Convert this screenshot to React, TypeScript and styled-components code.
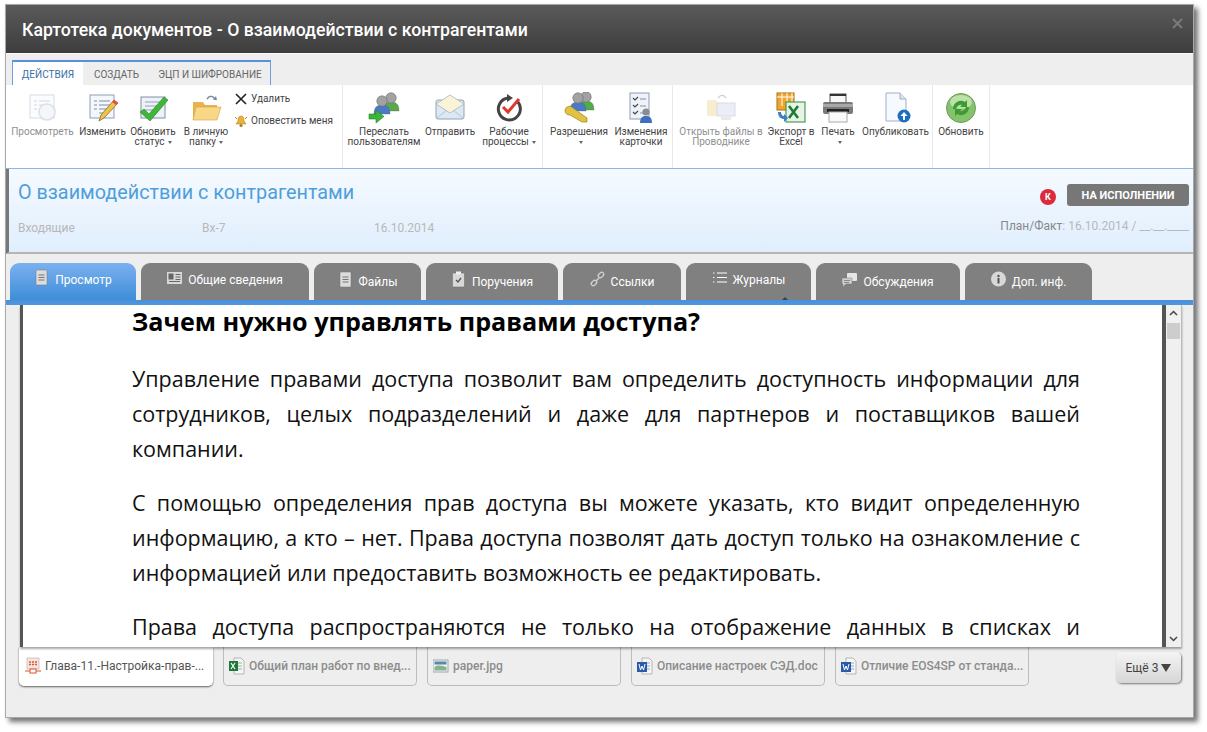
import React from "react";
import styled, { createGlobalStyle } from "styled-components";

const Global = createGlobalStyle`
  html, body { margin: 0; padding: 0; background: #fff; }
  body { font-family: Roboto, "Liberation Sans", sans-serif; }
  #root { width: 1207px; height: 732px; overflow: hidden; }
`;

const Page = styled.div`
  padding: 4px 0 0 5px;
`;
const Win = styled.div`
  width: 1189px;
  height: 714px;
  background: #eeeeee;
  box-shadow: 4px 4px 5px rgba(0, 0, 0, 0.55);
  display: flex;
  flex-direction: column;
  outline: 1px solid #a8a8a8;
  outline-offset: -1px;
`;
const TitleBar = styled.div`
  height: 49px;
  flex: none;
  padding: 0 11px 0 17px;
  display: flex;
  align-items: center;
  justify-content: space-between;
  background: linear-gradient(#5a5a5a, #3d3d3d);
  border-top: 1px solid #8a8a8a;
  box-sizing: border-box;
`;
const Title = styled.div`
  color: #fff;
  font-size: 17.67px;
  font-weight: 500;
  margin-top: 2px;
`;
const CloseIcon = styled.svg`
  width: 11px;
  height: 11px;
  margin-bottom: 12px;
`;
const Strip = styled.div`
  height: 32px;
  flex: none;
  box-sizing: border-box;
  padding: 6px 0 0 7px;
  border-top: 1px solid #fafafa;
  background: #eeeeee;
`;
const StripTabs = styled.div`
  display: inline-flex;
  height: 26px;
  box-sizing: border-box;
  border: 1px solid #6f9fe0;
  border-top: 2px solid #5b8fdc;
  border-bottom: none;
`;
const StripTab = styled.div<{ $w: number; $active?: boolean }>`
  width: ${(p) => p.$w}px;
  display: flex;
  align-items: center;
  justify-content: center;
  font-size: 10px;
  color: ${(p) => (p.$active ? "#3a6ea5" : "#666")};
  background: ${(p) => (p.$active ? "#fff" : "#eeeeee")};
`;
const Ribbon = styled.div`
  height: 84px;
  flex: none;
  box-sizing: border-box;
  display: flex;
  background: #fff;
  border-bottom: 1px solid #8db4e6;
`;
const Group = styled.div<{ $w: number }>`
  width: ${(p) => p.$w}px;
  flex: none;
  box-sizing: border-box;
  border-right: 1px solid #e8e8e8;
  display: flex;
  align-items: flex-start;
`;
const RBtn = styled.div<{ $w: number; $dim?: boolean }>`
  width: ${(p) => p.$w}px;
  flex: none;
  display: flex;
  flex-direction: column;
  align-items: center;
  padding-top: 7px;
  font-size: 10px;
  line-height: 10px;
  text-align: center;
  white-space: nowrap;
  color: ${(p) => (p.$dim ? "#8f8f8f" : "#444")};
`;
const RLabel = styled.span`
  display: block;
  height: 10px;
`;
const RIcon = styled.svg`
  width: 32px;
  height: 32px;
  margin-bottom: 3px;
  flex: none;
`;
const Caret = styled.span`
  display: inline-block;
  width: 0;
  height: 0;
  border: 2px solid transparent;
  border-top: 3px solid #666;
  margin-left: 3px;
  vertical-align: -1px;
`;
const SmallCol = styled.div`
  display: flex;
  flex-direction: column;
  gap: 7px;
  padding: 6px 0 0 3px;
  width: 109px;
  flex: none;
`;
const SmallBtn = styled.div`
  display: flex;
  align-items: center;
  gap: 3px;
  height: 15px;
  font-size: 10px;
  color: #444;
`;
const SmallIcon = styled.svg`
  width: 14px;
  height: 14px;
  flex: none;
`;
const Header = styled.div`
  height: 85px;
  flex: none;
  box-sizing: border-box;
  background: linear-gradient(#f5faff, #e0eefd);
  border-left: 4px solid #777;
  border-bottom: 2px solid #b5b5b5;
  padding: 13px 5px 0 9px;
  display: flex;
  justify-content: space-between;
`;
const HeadLeft = styled.div`
  display: flex;
  flex-direction: column;
`;
const DocTitle = styled.div`
  font-size: 19.8px;
  line-height: 22px;
  color: #4f9edb;
`;
const Meta = styled.div`
  display: flex;
  margin-top: 17px;
  font-size: 12px;
  line-height: 14px;
  color: #b8b8b8;
`;
const MetaItem = styled.span<{ $w: number }>`
  width: ${(p) => p.$w}px;
`;
const HeadRight = styled.div`
  display: flex;
  flex-direction: column;
  align-items: flex-end;
`;
const StatusRow = styled.div`
  display: flex;
  align-items: center;
  gap: 11px;
  margin-top: 2px;
`;
const Badge = styled.div`
  width: 16px;
  height: 16px;
  border-radius: 50%;
  background: #dc2b3c;
  color: #fff;
  font-size: 9px;
  font-weight: 700;
  display: flex;
  align-items: center;
  justify-content: center;
  margin-top: 3px;
`;
const Status = styled.div`
  width: 122px;
  height: 22px;
  border-radius: 3px;
  background: #777;
  color: #fff;
  font-size: 11px;
  font-weight: 700;
  display: flex;
  align-items: center;
  justify-content: center;
`;
const PlanFact = styled.div`
  margin-top: 13px;
  font-size: 12px;
  line-height: 14px;
  color: #b8b8b8;
  b {
    font-weight: 400;
    color: #888;
  }
`;
const TabRow = styled.div`
  height: 46px;
  flex: none;
  box-sizing: border-box;
  padding: 9px 0 0 5px;
  display: flex;
  gap: 5px;
  background: #eeeeee;
`;
const Tab = styled.div<{ $w: number; $active?: boolean; $dy: number }>`
  width: ${(p) => p.$w}px;
  flex: none;
  box-sizing: border-box;
  border-radius: 9px 9px 0 0;
  background: ${(p) =>
    p.$active ? "linear-gradient(#7ab1f0, #3f8dd8)" : "#808080"};
  color: #fff;
  font-size: 12px;
  display: flex;
  align-items: center;
  justify-content: center;
  gap: 6px;
  padding: 0 0 ${(p) => p.$dy * 3}px 0;
  position: relative;
`;
const TabIcon = styled.svg`
  width: 15px;
  height: 17px;
  flex: none;
  margin-top: -5px;
`;
const Notch = styled.span`
  position: absolute;
  right: 23px;
  bottom: 0;
  width: 0;
  height: 0;
  border: 3px solid transparent;
  border-top: none;
  border-bottom: 3px solid #26465f;
`;
const BlueLine = styled.div`
  height: 5px;
  flex: none;
  background: linear-gradient(#4a8fd6, #4d98e2);
`;
const Content = styled.div`
  height: 342px;
  flex: none;
  margin-left: 15px;
  width: 1162px;
  display: flex;
  box-shadow: 0 2px 2px rgba(0, 0, 0, 0.35);
  position: relative;
`;
const Doc = styled.div`
  width: 1146px;
  flex: none;
  box-sizing: border-box;
  overflow: hidden;
  background: #fff;
  border-left: 3px solid #555;
  border-right: 4px solid #555;
  padding: 0 82px 0 109px;
  font-family: "Open Sans", "Noto Sans", sans-serif;
  color: #111;
`;
const H2 = styled.h2`
  margin: 0 0 24px;
  font-size: 25.15px;
  line-height: 32px;
  font-weight: 700;
  color: #000;
`;
const P = styled.p<{ $clip?: boolean }>`
  margin: 0 0 19px;
  font-size: 21.5px;
  line-height: 35px;
  text-align: justify;
  text-align-last: ${(p) => (p.$clip ? "justify" : "auto")};
`;
const Scroll = styled.div`
  width: 16px;
  flex: none;
  background: #f0f0f0;
  border-right: 1px solid #bbb;
  box-sizing: border-box;
  display: flex;
  flex-direction: column;
  justify-content: space-between;
  align-items: center;
  padding: 4px 0;
  position: relative;
`;
const Thumb = styled.div`
  position: absolute;
  top: 18px;
  left: 1px;
  width: 13px;
  height: 16px;
  background: #cdcdcd;
`;
const ArrowIcon = styled.svg`
  width: 9px;
  height: 9px;
`;
const FileBar = styled.div`
  flex: 1;
  display: flex;
  align-items: flex-start;
  padding-left: 14px;
`;
const FileTab = styled.div<{ $active?: boolean }>`
  width: 194px;
  height: 39px;
  flex: none;
  box-sizing: border-box;
  margin-right: 10px;
  padding: 0 0 0 5px;
  display: flex;
  align-items: center;
  gap: 4px;
  font-size: 12px;
  font-weight: ${(p) => (p.$active ? 400 : 500)};
  white-space: nowrap;
  color: ${(p) => (p.$active ? "#555" : "#8c8c8c")};
  background: ${(p) => (p.$active ? "#fff" : "transparent")};
  border: 1px solid ${(p) => (p.$active ? "#fff" : "#bcbcbc")};
  border-top: none;
  border-radius: 0 0 5px 5px;
  box-shadow: ${(p) => (p.$active ? "0 1px 2px rgba(0,0,0,.6)" : "none")};
`;
const FileIcon = styled.svg`
  width: 16px;
  height: 18px;
  flex: none;
`;
const More = styled.div`
  width: 65px;
  height: 31px;
  margin: 5px 0 0 77px;
  flex: none;
  border-radius: 5px;
  background: linear-gradient(#f4f4f4, #d6d6d6);
  box-shadow: 1px 1px 2px rgba(0, 0, 0, 0.5);
  font-size: 12px;
  color: #444;
  display: flex;
  align-items: center;
  justify-content: center;
  gap: 3px;
`;
const MoreTri = styled.span`
  width: 0;
  height: 0;
  border: 5px solid transparent;
  border-top: 8px solid #444;
  border-bottom: none;
`;

const Person = ({ x, y, c }: { x: number; y: number; c: string }) => (
  <g>
    <path d={`M${x - 8} ${y + 18}c0-7 3-9 8-9s8 2 8 9z`} fill={c} stroke="#555" strokeWidth=".3" />
    <circle cx={x} cy={y + 5} r="5.2" fill="#a2a2a2" stroke="#6a6a6a" strokeWidth=".6" />
  </g>
);
const Page1 = ({ o = 1 }: { o?: number }) => (
  <g opacity={o}>
    <rect x="3" y="3" width="24" height="23" fill="#f4f7fb" stroke="#8c9db5" />
    <path d="M7 9h3M7 13h3M7 17h3M12 9h11M12 13h11M12 17h11M12 21h8" stroke="#7c8ea8" strokeWidth="1.2" />
  </g>
);
const I: Record<string, React.ReactNode> = {
  view: (
    <g opacity=".35">
      <Page1 />
      <circle cx="20" cy="20" r="8" fill="#dfe8f2" stroke="#97a7b8" strokeWidth="1.5" />
    </g>
  ),
  edit: (
    <g>
      <Page1 />
      <path d="M12 29l2-6L27 8l4 3-14 15z" fill="#f0c14b" stroke="#8a6a20" strokeWidth=".8" />
      <path d="M27 8l4 3-2 2-4-3z" fill="#d9534f" />
    </g>
  ),
  check: (
    <g>
      <rect x="4" y="5" width="24" height="21" fill="#eef2f7" stroke="#7f8fa5" />
      <path d="M8 10h16M8 14h16M8 18h10" stroke="#8fa0b8" strokeWidth="1.2" />
      <path d="M3 20l4-3 5 5L27 5l4 3-18 21z" fill="#3fb53a" stroke="#24851f" strokeWidth=".6" />
    </g>
  ),
  folder: (
    <g>
      <path d="M3 10h10l2 3h12v15H3z" fill="#e9b34f" />
      <path d="M6 15h25l-4 13H3z" fill="#f8d787" stroke="#d3a347" strokeWidth=".6" />
      <path d="M17 7c3-4 6-3 8 0" fill="none" stroke="#7b8a9b" strokeWidth="1.5" />
      <path d="M23 8l4 0-1-4z" fill="#7b8a9b" />
    </g>
  ),
  forward: (
    <g>
      <Person x={23} y={1} c="#5aa84a" />
      <Person x={14} y={4} c="#4a79c8" />
      <path d="M1 22h7v-4l8 6.500-8 6.500v-4H1z" fill="#3cb43c" stroke="#1f8a22" strokeWidth=".6" />
    </g>
  ),
  mail: (
    <g>
      <rect x="2" y="8" width="28" height="19" rx="2" fill="#dce8f3" stroke="#8da4bb" />
      <path d="M2 12L16 3l14 9-14 9z" fill="#fbf3d8" stroke="#a9b4bd" strokeWidth=".8" />
      <path d="M3 26l10-8M29 26l-10-8" stroke="#b4c5d6" />
    </g>
  ),
  flow: (
    <g>
      <path d="M24 9a11 11 0 1 1-9-3" fill="none" stroke="#444" strokeWidth="3" />
      <path d="M14 2l6 4-6 4z" fill="#444" />
      <path d="M10 15l5 5L26 7" fill="none" stroke="#e0392c" strokeWidth="3" />
    </g>
  ),
  perm: (
    <g>
      <Person x={23} y={0} c="#4fae47" />
      <Person x={15} y={1} c="#4a79c8" />
      <path d="M2 18a4.500 4.500 0 0 1 8-2l14 10v4h-5L7 23a4.500 4.500 0 0 1-5-5z" fill="#e4c241" stroke="#9c8320" strokeWidth=".7" />
    </g>
  ),
  changes: (
    <g>
      <rect x="5" y="1" width="19" height="26" fill="#eef3fa" stroke="#8c9db5" />
      <path d="M8 6l2 2 3-3M8 13l2 2 3-3M8 20l2 2 3-3" fill="none" stroke="#444" strokeWidth="1.1" />
      <path d="M15 7h6M15 14h6M15 21h3" stroke="#7c8ea8" />
      <path d="M15 31c0-6 3-7 6-7s6 1 6 7z" fill="#3f6fbd" />
      <circle cx="21" cy="20" r="3.6" fill="#8c8c8c" />
    </g>
  ),
  openf: (
    <g opacity=".4">
      <path d="M2 8h9l2 3h7v13H2z" fill="#f0d08f" />
      <rect x="12" y="11" width="18" height="13" fill="#cfd4f0" stroke="#aaa" />
      <rect x="16" y="24" width="10" height="4" fill="#ccc" />
      <path d="M13 6c3-4 6-3 8 0" fill="none" stroke="#888" strokeWidth="1.3" />
    </g>
  ),
  excel: (
    <g>
      <rect x="2" y="1" width="17" height="17" fill="#f0a52c" stroke="#a8711a" />
      <path d="M7 1v13M12 1v13M17 1v13M2 5h17" stroke="#fff" />
      <rect x="11" y="10" width="19" height="20" fill="#e8f3e8" stroke="#2f8a3c" />
      <path d="M14 14l9 12M23 14l-9 12" stroke="#1e7a34" strokeWidth="2.6" />
      <path d="M3 20c0 5 3 7 6 7v3l4-4-4-4v2c-2 0-3-2-3-4z" fill="#3f7fc8" />
    </g>
  ),
  print: (
    <g>
      <rect x="8" y="2" width="16" height="9" fill="#f8f8f8" stroke="#555" />
      <rect x="8" y="2" width="16" height="2" fill="#333" />
      <rect x="1" y="10" width="30" height="12" rx="2" fill="#7a7a7a" />
      <rect x="1" y="12" width="30" height="3" fill="#a8a8a8" />
      <rect x="5" y="17" width="22" height="3" fill="#222" />
      <rect x="7" y="20" width="18" height="10" fill="#fafafa" stroke="#aaa" />
    </g>
  ),
  publish: (
    <g>
      <path d="M6 1h14l6 6v22H6z" fill="#f6f9fd" stroke="#9fb0c4" />
      <path d="M20 1v6h6" fill="#dbe5f0" stroke="#9fb0c4" />
      <circle cx="24" cy="24" r="6.5" fill="#1f6fc0" />
      <path d="M24 20l-3.5 4H23v4h2v-4h2.5z" fill="#fff" />
    </g>
  ),
  refresh: (
    <g>
      <circle cx="16" cy="16" r="14.5" fill="#84c26c" stroke="#6f9c5a" />
      <ellipse cx="16" cy="10" rx="11" ry="7" fill="#cbe8b9" opacity=".8" />
      <path d="M8 17a8 8 0 0 1 12-7l2-2v7h-7l2-2a5 5 0 0 0-6 4z" fill="#3e9b34" />
      <path d="M24 15a8 8 0 0 1-12 7l-2 2v-7h7l-2 2a5 5 0 0 0 6-4z" fill="#3e9b34" />
    </g>
  ),
};

const TI: Record<string, React.ReactNode> = {
  doc: (
    <g>
      <rect x="2" y="1" width="11" height="15" rx="1" fill="#dcdcdc" stroke="#777" strokeWidth=".5" />
      <path d="M4.5 6h6M4.5 8.5h6M4.5 11h6" stroke="#777" />
    </g>
  ),
  book: (
    <g>
      <rect x="0" y="3" width="15" height="12" fill="#d8d8d8" />
      <rect x="1.500" y="4.500" width="5" height="6" fill="#666" />
      <path d="M8.500 5.500h5M8.500 8h5M8.500 10.500h5M2 12.500h11" stroke="#666" />
    </g>
  ),
  task: (
    <g>
      <rect x="1.500" y="2" width="12" height="14" rx="1" fill="#d8d8d8" stroke="#666" strokeWidth=".5" />
      <rect x="5" y="0.500" width="5" height="3" fill="#f0f0f0" />
      <path d="M5 9l2 2 3-4" fill="none" stroke="#555" strokeWidth="1.3" />
    </g>
  ),
  link: (
    <g fill="none" stroke="#cfcfcf" strokeWidth="1.4">
      <rect x="-3" y="-2" width="6" height="4" rx="2" transform="translate(11 4) rotate(-45)" />
      <rect x="-3" y="-2" width="6" height="4" rx="2" transform="translate(4 12) rotate(-45)" />
      <path d="M6 10l3-3" />
    </g>
  ),
  list: (
    <g stroke="#fff" strokeWidth="1.2">
      <path d="M5 4h10M5 8.500h10M5 13h10" />
      <path d="M1 4h2M1 8.500h2M1 13h2" strokeDasharray="1 .6" />
    </g>
  ),
  chat: (
    <g>
      <rect x="5" y="2" width="10" height="8" rx="1" fill="#e6e6e6" />
      <path d="M0 7h10v6H4l-3 3v-3H0z" fill="#cfcfcf" stroke="#777" strokeWidth=".5" />
      <path d="M2 9.500h6M2 11.500h5" stroke="#777" strokeWidth=".8" />
    </g>
  ),
  info: (
    <g>
      <circle cx="7.500" cy="8" r="7.500" fill="#d8d8d8" />
      <rect x="6.500" y="7" width="2" height="5.500" fill="#555" />
      <circle cx="7.500" cy="5" r="1.200" fill="#555" />
    </g>
  ),
};

const FI: Record<string, React.ReactNode> = {
  pdf: (
    <g>
      <rect x="2" y="1" width="12" height="11" fill="#f6e6e0" stroke="#aaa" strokeWidth=".6" />
      <path d="M4 5h8M4 7.500h8" stroke="#e0532c" strokeWidth="1.5" strokeDasharray="2 1" />
      <path d="M0 14h16" stroke="#e0532c" />
      <rect x="5" y="12" width="6" height="4" fill="#fff" stroke="#e0532c" />
    </g>
  ),
  xls: (
    <g>
      <path d="M5 1h7l3 3v13H5z" fill="#f6f6f6" stroke="#b5b5b5" />
      <path d="M9 6h4M9 9h4M9 12h4" stroke="#8cc08c" />
      <rect x="0" y="4" width="9" height="10" fill="#1f7a3a" />
      <path d="M2 6l4 6M6 6l-4 6" stroke="#fff" strokeWidth="1.2" />
    </g>
  ),
  jpg: (
    <g>
      <rect x="0" y="3" width="15" height="12" fill="#eef3f5" stroke="#9aa8b0" />
      <rect x="1.500" y="4.500" width="12" height="3" fill="#5d87a8" />
      <path d="M1.500 10c4-3 8-1 12 0v3.500h-12z" fill="#86b28c" />
    </g>
  ),
  doc: (
    <g>
      <path d="M5 1h7l3 3v13H5z" fill="#f6f6f6" stroke="#b5b5b5" />
      <path d="M10 6h3M10 9h3M10 12h3" stroke="#8fa6cc" />
      <rect x="0" y="5" width="10" height="10" fill="#2a5ba8" />
      <path d="M2 7l1.500 6L5 9l1.500 4L8 7" fill="none" stroke="#fff" strokeWidth="1" />
    </g>
  ),
};

const Ic = ({ n }: { n: string }) => <RIcon viewBox="0 0 32 32">{I[n]}</RIcon>;

const Btn = ({
  w,
  n,
  dim,
  caret,
  l1,
  l2,
}: {
  w: number;
  n: string;
  dim?: boolean;
  caret?: boolean;
  l1: string;
  l2?: string;
}) => (
  <RBtn $w={w} $dim={dim}>
    <Ic n={n} />
    <RLabel>{l1}</RLabel>
    <RLabel>
      {l2}
      {caret && <Caret />}
    </RLabel>
  </RBtn>
);

const tabs = [
  { w: 126, t: "Просмотр", i: "doc", active: true, dy: 1 },
  { w: 168, t: "Общие сведения", i: "book", dy: 1 },
  { w: 107, t: "Файлы", i: "doc", dy: 0 },
  { w: 132, t: "Поручения", i: "task", dy: 0 },
  { w: 118, t: "Ссылки", i: "link", dy: 0 },
  { w: 125, t: "Журналы", i: "list", dy: 1, notch: true },
  { w: 144, t: "Обсуждения", i: "chat", dy: 0 },
  { w: 127, t: "Доп. инф.", i: "info", dy: 0 },
];

const files = [
  { t: "Глава-11.-Настройка-прав-...", i: "pdf", active: true },
  { t: "Общий план работ по внед...", i: "xls" },
  { t: "paper.jpg", i: "jpg" },
  { t: "Описание настроек СЭД.doc", i: "doc" },
  { t: "Отличие EOS4SP от станда...", i: "doc" },
];

export default function App() {
  return (
    <Page>
      <Global />
      <Win>
        <TitleBar>
          <Title>Картотека документов - О взаимодействии с контрагентами</Title>
          <CloseIcon viewBox="0 0 11 11">
            <path d="M1 1l9 9M10 1l-9 9" stroke="#7a7a7a" strokeWidth="2" />
          </CloseIcon>
        </TitleBar>
        <Strip>
          <StripTabs>
            <StripTab $w={70} $active>ДЕЙСТВИЯ</StripTab>
            <StripTab $w={67}>СОЗДАТЬ</StripTab>
            <StripTab $w={120}>ЭЦП И ШИФРОВАНИЕ</StripTab>
          </StripTabs>
        </Strip>
        <Ribbon>
          <Group $w={338}>
            <Btn w={75} n="view" dim l1="Просмотреть" />
            <Btn w={45} n="edit" l1="Изменить" />
            <Btn w={56} n="check" l1="Обновить" l2="статус" caret />
            <Btn w={50} n="folder" l1="В личную" l2="папку" caret />
            <SmallCol>
              <SmallBtn>
                <SmallIcon viewBox="0 0 14 14">
                  <path d="M2 2l10 10M12 2L2 12" stroke="#222" strokeWidth="1.6" />
                </SmallIcon>
                Удалить
              </SmallBtn>
              <SmallBtn>
                <SmallIcon viewBox="0 0 14 14">
                  <path d="M7 2c-3 0-3 3-3 5l-2 3h10l-2-3c0-2 0-5-3-5z" fill="#e8b23a" stroke="#a67c1d" strokeWidth=".5" />
                  <circle cx="7" cy="11.500" r="1.500" fill="#a67c1d" />
                  <path d="M1 3l2 2M13 3l-2 2" stroke="#e2703a" />
                </SmallIcon>
                Оповестить меня
              </SmallBtn>
            </SmallCol>
          </Group>
          <Group $w={200}>
            <Btn w={82} n="forward" l1="Переслать" l2="пользователям" />
            <Btn w={50} n="mail" l1="Отправить" />
            <Btn w={68} n="flow" l1="Рабочие" l2="процессы" caret />
          </Group>
          <Group $w={130}>
            <Btn w={72} n="perm" l1="Разрешения" caret l2="" />
            <Btn w={52} n="changes" l1="Изменения" l2="карточки" />
          </Group>
          <Group $w={260}>
            <Btn w={96} n="openf" dim l1="Открыть файлы в" l2="Проводнике" />
            <Btn w={44} n="excel" l1="Экспорт в" l2="Excel" />
            <Btn w={50} n="print" l1="Печать" caret l2="" />
            <Btn w={65} n="publish" l1="Опубликовать" />
          </Group>
          <Group $w={57}>
            <Btn w={56} n="refresh" l1="Обновить" />
          </Group>
        </Ribbon>
        <Header>
          <HeadLeft>
            <DocTitle>О взаимодействии с контрагентами</DocTitle>
            <Meta>
              <MetaItem $w={184}>Входящие</MetaItem>
              <MetaItem $w={172}>Вх-7</MetaItem>
              <span>16.10.2014</span>
            </Meta>
          </HeadLeft>
          <HeadRight>
            <StatusRow>
              <Badge>К</Badge>
              <Status>НА ИСПОЛНЕНИИ</Status>
            </StatusRow>
            <PlanFact>
              <b>План/Факт</b>: 16.10.2014 / __.__.____
            </PlanFact>
          </HeadRight>
        </Header>
        <TabRow>
          {tabs.map((t) => (
            <Tab key={t.t} $w={t.w} $active={t.active} $dy={t.dy}>
              <TabIcon viewBox="0 0 15 17">{TI[t.i]}</TabIcon>
              {t.t}
              {t.notch && <Notch />}
            </Tab>
          ))}
        </TabRow>
        <BlueLine />
        <Content>
          <Doc>
            <H2>Зачем нужно управлять правами доступа?</H2>
            <P>
              Управление правами доступа позволит вам определить доступность информации для
              сотрудников, целых подразделений и даже для партнеров и поставщиков вашей компании.
            </P>
            <P>
              С помощью определения прав доступа вы можете указать, кто видит определенную
              информацию, а кто – нет. Права доступа позволят дать доступ только на ознакомление с
              информацией или предоставить возможность ее редактировать.
            </P>
            <P $clip>Права доступа распространяются не только на отображение данных в списках и</P>
          </Doc>
          <Scroll>
            <ArrowIcon viewBox="0 0 9 9">
              <path d="M1 6l3.500-3.500L8 6" fill="none" stroke="#444" strokeWidth="1.5" />
            </ArrowIcon>
            <Thumb />
            <ArrowIcon viewBox="0 0 9 9">
              <path d="M1 3l3.500 3.500L8 3" fill="none" stroke="#444" strokeWidth="1.5" />
            </ArrowIcon>
          </Scroll>
        </Content>
        <FileBar>
          {files.map((f) => (
            <FileTab key={f.t} $active={f.active}>
              <FileIcon viewBox="0 0 16 18">{FI[f.i]}</FileIcon>
              {f.t}
            </FileTab>
          ))}
          <More>
            Ещё 3 <MoreTri />
          </More>
        </FileBar>
      </Win>
    </Page>
  );
}
